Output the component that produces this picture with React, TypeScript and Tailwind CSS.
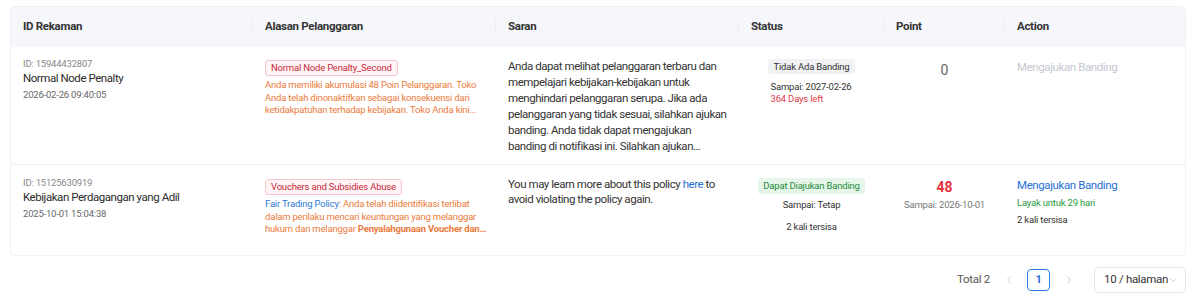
import { ChevronLeft, ChevronRight, ChevronDown } from "lucide-react";

const cols = ["w-[242px]", "w-[243px]", "w-[243px]", "w-[145px]", "w-[121px]", "flex-1"];

const small = "text-[9.5px] tracking-[-0.2px]";

export default function App() {
  return (
    <div className="w-[1200px] h-[301px] bg-white font-['Roboto',sans-serif] text-[#333]">
      <div className="pt-[6px] pl-[10px] pr-[14px]">
        <div className="border border-[#f0f1f4] rounded-[4px] overflow-hidden">
          {/* HEADER */}
          <div className="flex h-[40px] bg-[#f5f7fb] text-[11.5px] tracking-[-0.3px] font-bold text-[#333]">
            {["ID Rekaman", "Alasan Pelanggaran", "Saran", "Status", "Point", "Action"].map((h, i) => (
              <div key={h} className={`${cols[i]} flex items-center px-[12px] relative`}>
                {h}
                {i < 5 && <span className="absolute right-0 top-[12px] h-[16px] w-px bg-[#eceef2]" />}
              </div>
            ))}
          </div>

          {/* ROW 1 */}
          <div className="flex h-[118px] border-b border-[#f0f1f4]">
            <div className={`${cols[0]} px-[12px] pt-[11px]`}>
              <p className={`${small} text-[#888] leading-[12px]`}>ID: 15944432807</p>
              <p className="text-[11.5px] tracking-[-0.45px] leading-[15px] text-[#2b2b2b] mt-[1px]">Normal Node Penalty</p>
              <p className={`${small} text-[#666] leading-[14px] mt-[2px]`}>2026-02-26 09:40:05</p>
            </div>
            <div className={`${cols[1]} px-[12px] pt-[13px]`}>
              <div className={`w-fit ${small} leading-[12px] px-[5px] py-[1px] rounded-[3px] border border-[#f7c6cc] bg-[#fff5f6] text-[#c8283c]`}>
                Normal Node Penalty_Second
              </div>
              <p className={`${small} leading-[12.5px] text-[#ec7b3b] mt-[3px] whitespace-nowrap`}>
                Anda memiliki akumulasi 48 Poin Pelanggaran. Toko
                <br />
                Anda telah dinonaktifkan sebagai konsekuensi dari
                <br />
                ketidakpatuhan terhadap kebijakan. Toko Anda kini…
              </p>
            </div>
            <div className={`${cols[2]} px-[12px] pt-[11px]`}>
              <p className="text-[11.5px] tracking-[-0.45px] leading-[16px] text-[#333] whitespace-nowrap">
                Anda dapat melihat pelanggaran terbaru dan
                <br />
                mempelajari kebijakan-kebijakan untuk
                <br />
                menghindari pelanggaran serupa. Jika ada
                <br />
                pelanggaran yang tidak sesuai, silahkan ajukan
                <br />
                banding. Anda tidak dapat mengajukan
                <br />
                banding di notifikasi ini. Silahkan ajukan…
              </p>
            </div>
            <div className={`${cols[3]} flex justify-center pt-[12px]`}>
              <div className="flex flex-col items-start">
                <div className={`${small} leading-[11px] px-[6px] py-[2px] rounded-[3px] bg-[#f1f2f4] text-[#333]`}>
                  Tidak Ada Banding
                </div>
                <p className={`${small} leading-[12px] text-[#333] mt-[7px] pl-[3px]`}>Sampai: 2027-02-26</p>
                <p className={`${small} leading-[12px] text-[#e03a4a] pl-[3px]`}>364 Days left</p>
              </div>
            </div>
            <div className={`${cols[4]} flex justify-center pt-[14px]`}>
              <p className="text-[14px] leading-[18px] text-[#666]">0</p>
            </div>
            <div className={`${cols[5]} px-[12px] pt-[13px]`}>
              <p className="text-[11.5px] tracking-[-0.4px] leading-[14px] text-[#c5c8cf]">Mengajukan Banding</p>
            </div>
          </div>

          {/* ROW 2 */}
          <div className="flex h-[90px]">
            <div className={`${cols[0]} px-[12px] pt-[12px]`}>
              <p className={`${small} text-[#888] leading-[12px]`}>ID: 15125630919</p>
              <p className="text-[11.5px] tracking-[-0.45px] leading-[15px] text-[#2b2b2b] mt-[1px]">Kebijakan Perdagangan yang Adil</p>
              <p className={`${small} text-[#666] leading-[14px] mt-[2px]`}>2025-10-01 15:04:38</p>
            </div>
            <div className={`${cols[1]} px-[12px] pt-[14px]`}>
              <div className={`w-fit ${small} leading-[12px] px-[5px] py-[1px] rounded-[3px] border border-[#f7c6cc] bg-[#fff5f6] text-[#c8283c]`}>
                Vouchers and Subsidies Abuse
              </div>
              <p className={`${small} leading-[12.5px] text-[#ec7b3b] mt-[3px] whitespace-nowrap`}>
                <span className="text-[#2f7bd9]">Fair Trading Policy</span>: Anda telah diidentifikasi terlibat
                <br />
                dalam perilaku mencari keuntungan yang melanggar
                <br />
                hukum dan melanggar <span className="font-bold">Penyalahgunaan Voucher dan…</span>
              </p>
            </div>
            <div className={`${cols[2]} px-[12px] pt-[12px]`}>
              <p className="text-[11.5px] tracking-[-0.45px] leading-[15px] text-[#333] whitespace-nowrap">
                You may learn more about this policy <span className="text-[#1f6fd6]">here</span> to
                <br />
                avoid violating the policy again.
              </p>
            </div>
            <div className={`${cols[3]} flex flex-col items-center pt-[13px]`}>
              <div className={`${small} leading-[12px] px-[5px] py-[2px] rounded-[3px] bg-[#e6f7ea] text-[#1f8a3c]`}>
                Dapat Diajukan Banding
              </div>
              <p className={`${small} leading-[12px] text-[#333] mt-[5px]`}>Sampai: Tetap</p>
              <p className={`${small} leading-[12px] text-[#333] mt-[10px]`}>2 kali tersisa</p>
            </div>
            <div className={`${cols[4]} flex flex-col items-center pt-[14px]`}>
              <p className="text-[14px] leading-[16px] font-bold text-[#e53340]">48</p>
              <p className={`${small} leading-[12px] text-[#777] mt-[4px]`}>Sampai: 2026-10-01</p>
            </div>
            <div className={`${cols[5]} px-[12px] pt-[13px]`}>
              <p className="text-[11.5px] tracking-[-0.4px] leading-[14px] text-[#1f6fd6]">Mengajukan Banding</p>
              <p className={`${small} leading-[12px] text-[#1f9a3e] mt-[5px]`}>Layak untuk 29 hari</p>
              <p className={`${small} leading-[12px] text-[#333] mt-[5px]`}>2 kali tersisa</p>
            </div>
          </div>
        </div>

        {/* PAGINATION */}
        <div className="flex items-center justify-end mt-[11px] h-[26px] text-[11.5px] tracking-[-0.3px]">
          <span className="text-[#555] mr-[13px]">Total 2</span>
          <ChevronLeft size={12} className="text-[#c8cbd1] mr-[12px]" />
          <span className="w-[23px] h-[22px] flex items-center justify-center border border-[#2f7bd9] rounded-[4px] text-[#1f6fd6] text-[11px] font-bold">
            1
          </span>
          <ChevronRight size={12} className="text-[#c8cbd1] ml-[13px] mr-[19px]" />
          <div className="w-[92px] h-[26px] flex items-center justify-between whitespace-nowrap border border-[#e5e7eb] rounded-[4px] pl-[9px] pr-[6px] text-[#333]">
            10 / halaman
            <ChevronDown size={12} className="text-[#c8cbd1]" />
          </div>
        </div>
      </div>
    </div>
  );
}
